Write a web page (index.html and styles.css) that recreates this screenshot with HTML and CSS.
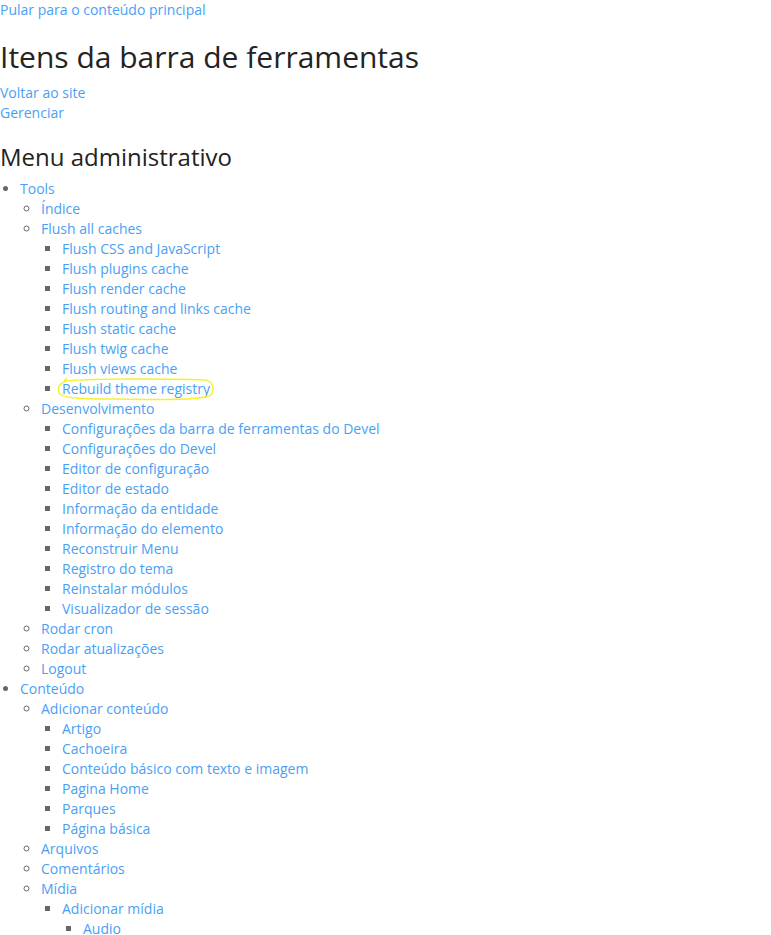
FILE: index.html
```html
<!DOCTYPE html>
<html lang="pt-br">
<head>
<meta charset="utf-8">
<title>Itens da barra de ferramentas</title>
<link rel="stylesheet" href="styles.css">
</head>
<body>
<a class="skip" href="#main">Pular para o conteúdo principal</a>
<h1 class="title">Itens da barra de ferramentas</h1>
<div class="bar">
  <div><a href="#">Voltar ao site</a></div>
  <div><a href="#">Gerenciar</a></div>
</div>
<h2 class="subtitle">Menu administrativo</h2>
<ul class="menu lvl1">
  <li><a href="#">Tools</a>
    <ul class="menu lvl2">
      <li><a href="#">Índice</a></li>
      <li><a href="#">Flush all caches</a>
        <ul class="menu lvl3">
          <li><a href="#">Flush CSS and JavaScript</a></li>
          <li><a href="#">Flush plugins cache</a></li>
          <li><a href="#">Flush render cache</a></li>
          <li><a href="#">Flush routing and links cache</a></li>
          <li><a href="#">Flush static cache</a></li>
          <li><a href="#">Flush twig cache</a></li>
          <li><a href="#">Flush views cache</a></li>
          <li><span class="mark"><a href="#">Rebuild theme registry</a><svg class="ring" viewBox="0 0 160 24" preserveAspectRatio="none"><path d="M10 1 C8 3 6 4 9 4 C40 1 120 2 150 3 C158 4 160 12 156 18 C150 23 110 23 60 22 C30 22 5 22 2 16 C0 10 3 6 10 4" fill="none" stroke="#f7f032" stroke-width="1.5"/></svg></span></li>
        </ul>
      </li>
      <li><a href="#">Desenvolvimento</a>
        <ul class="menu lvl3">
          <li><a href="#">Configurações da barra de ferramentas do Devel</a></li>
          <li><a href="#">Configurações do Devel</a></li>
          <li><a href="#">Editor de configuração</a></li>
          <li><a href="#">Editor de estado</a></li>
          <li><a href="#">Informação da entidade</a></li>
          <li><a href="#">Informação do elemento</a></li>
          <li><a href="#">Reconstruir Menu</a></li>
          <li><a href="#">Registro do tema</a></li>
          <li><a href="#">Reinstalar módulos</a></li>
          <li><a href="#">Visualizador de sessão</a></li>
        </ul>
      </li>
      <li><a href="#">Rodar cron</a></li>
      <li><a href="#">Rodar atualizações</a></li>
      <li><a href="#">Logout</a></li>
    </ul>
  </li>
  <li><a href="#">Conteúdo</a>
    <ul class="menu lvl2">
      <li><a href="#">Adicionar conteúdo</a>
        <ul class="menu lvl3">
          <li><a href="#">Artigo</a></li>
          <li><a href="#">Cachoeira</a></li>
          <li><a href="#">Conteúdo básico com texto e imagem</a></li>
          <li><a href="#">Pagina Home</a></li>
          <li><a href="#">Parques</a></li>
          <li><a href="#">Página básica</a></li>
        </ul>
      </li>
      <li><a href="#">Arquivos</a></li>
      <li><a href="#">Comentários</a></li>
      <li><a href="#">Mídia</a>
        <ul class="menu lvl3">
          <li><a href="#">Adicionar mídia</a>
            <ul class="menu lvl4">
              <li><a href="#">Audio</a></li>
            </ul>
          </li>
        </ul>
      </li>
    </ul>
  </li>
</ul>
</body>
</html>
```
FILE: styles.css
```css
html, body {
  margin: 0;
  padding: 0;
}
body {
  font-family: "Open Sans", "Liberation Sans", sans-serif;
  font-size: 14px;
  line-height: 20px;
  color: #232323;
  background: #fff;
}
a {
  color: #4a9ff5;
  text-decoration: none;
}
.skip {
  display: block;
}
.title {
  font-size: 30px;
  font-weight: 400;
  line-height: 36px;
  margin: 19px 0 8px;
  color: #232323;
}
.subtitle {
  font-size: 24px;
  font-weight: 400;
  line-height: 30px;
  margin: 19px 0 7px;
  color: #232323;
}
.menu {
  margin: 0;
  padding-left: 21px;
}
.lvl1 {
  padding-left: 20px;
  list-style: disc;
  color: #666;
}
.lvl2 { list-style: circle; }
.lvl3 { list-style: square; }
.lvl4 { list-style: square; }
.mark {
  position: relative;
  display: inline-block;
}
.ring {
  position: absolute;
  left: -5px;
  top: -2px;
  width: calc(100% + 10px);
  height: 24px;
  pointer-events: none;
}
```
